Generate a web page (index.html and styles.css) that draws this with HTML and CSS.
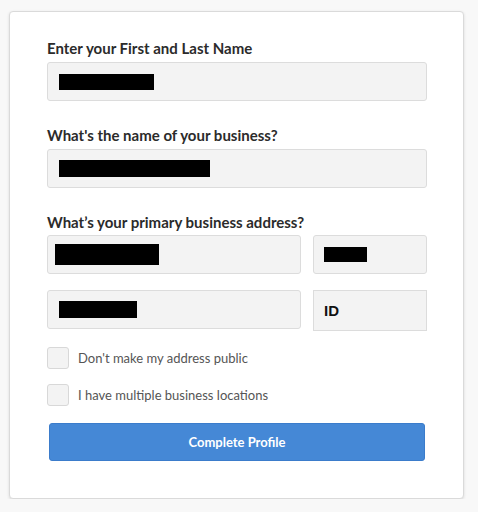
FILE: index.html
```html
<!DOCTYPE html>
<html>
<head>
<meta charset="utf-8">
<link rel="stylesheet" href="styles.css">
</head>
<body>
<div class="card">
  <form class="form">
    <label class="label">Enter your First and Last Name</label>
    <div class="input"><span class="redact" style="width:95px"></span></div>

    <label class="label gap">What's the name of your business?</label>
    <div class="input"><span class="redact" style="width:151px;height:17px"></span></div>

    <label class="label gap">What’s your primary business address?</label>
    <div class="row">
      <div class="input wide tight"><span class="redact" style="width:104px;height:21px"></span></div>
      <div class="input narrow"><span class="redact" style="width:43px;height:15px"></span></div>
    </div>
    <div class="row row2">
      <div class="input wide"><span class="redact" style="width:78px;height:17px"></span></div>
      <div class="input narrow select">ID</div>
    </div>

    <div class="check first"><span class="box"></span><span class="check-text">Don't make my address public</span></div>
    <div class="check"><span class="box"></span><span class="check-text">I have multiple business locations</span></div>

    <button type="button" class="btn">Complete Profile</button>
  </form>
</div>
</body>
</html>
```
FILE: styles.css
```css
html, body {
  margin: 0;
  padding: 0;
  background: #f8f8f8;
}
body {
  padding: 11px 0 0 9px;
  font-family: Lato, "Liberation Sans", sans-serif;
}
.card {
  width: 453px;
  height: 486px;
  background: #fff;
  border: 1px solid #dadada;
  border-radius: 4px;
  box-shadow: 0 1px 3px rgba(0,0,0,0.12);
  box-sizing: content-box;
}
.form {
  display: flex;
  flex-direction: column;
  padding: 28px 0 0 37px;
  width: 380px;
}
.label {
  display: block;
  font-size: 15px;
  line-height: 17px;
  font-weight: 700;
  color: #2b2b2b;
  margin-bottom: 5px;
}
.label.gap {
  margin-top: 26px;
}
.label.gap + .row {
  margin-top: -1px;
}
.input {
  box-sizing: border-box;
  height: 39px;
  background: #f3f3f3;
  border: 1px solid #dcdcdc;
  border-radius: 3px;
  display: flex;
  align-items: center;
  padding-left: 11px;
}
.input.tight {
  padding-left: 7px;
}
.redact {
  display: inline-block;
  height: 16px;
  background: #000;
}
.row {
  display: flex;
  gap: 12px;
}
.row2 {
  margin-top: 16px;
}
.wide {
  width: 254px;
}
.narrow {
  width: 114px;
  padding-left: 10px;
}
.select {
  height: 41px;
  border-radius: 0;
  font-family: "Liberation Sans", Arial, sans-serif;
  font-size: 15px;
  font-weight: 700;
  color: #111;
}
.row2 .input.wide {
  margin-bottom: 2px;
}
.check {
  display: flex;
  align-items: center;
  margin-top: 15px;
  height: 22px;
}
.check.first {
  margin-top: 16px;
}
.box {
  box-sizing: border-box;
  width: 22px;
  height: 22px;
  background: #f3f3f3;
  border: 1px solid #d8d8d8;
  border-radius: 3px;
  margin-right: 9px;
}
.check-text {
  font-size: 13px;
  color: #555;
}
.btn {
  margin: 17px 0 0 2px;
  width: 376px;
  height: 38px;
  background: #4588d6;
  border: 1px solid #3b7ccb;
  border-radius: 3px;
  color: #fff;
  font-family: Lato, "Liberation Sans", sans-serif;
  font-size: 13px;
  font-weight: 700;
  cursor: pointer;
}
```
